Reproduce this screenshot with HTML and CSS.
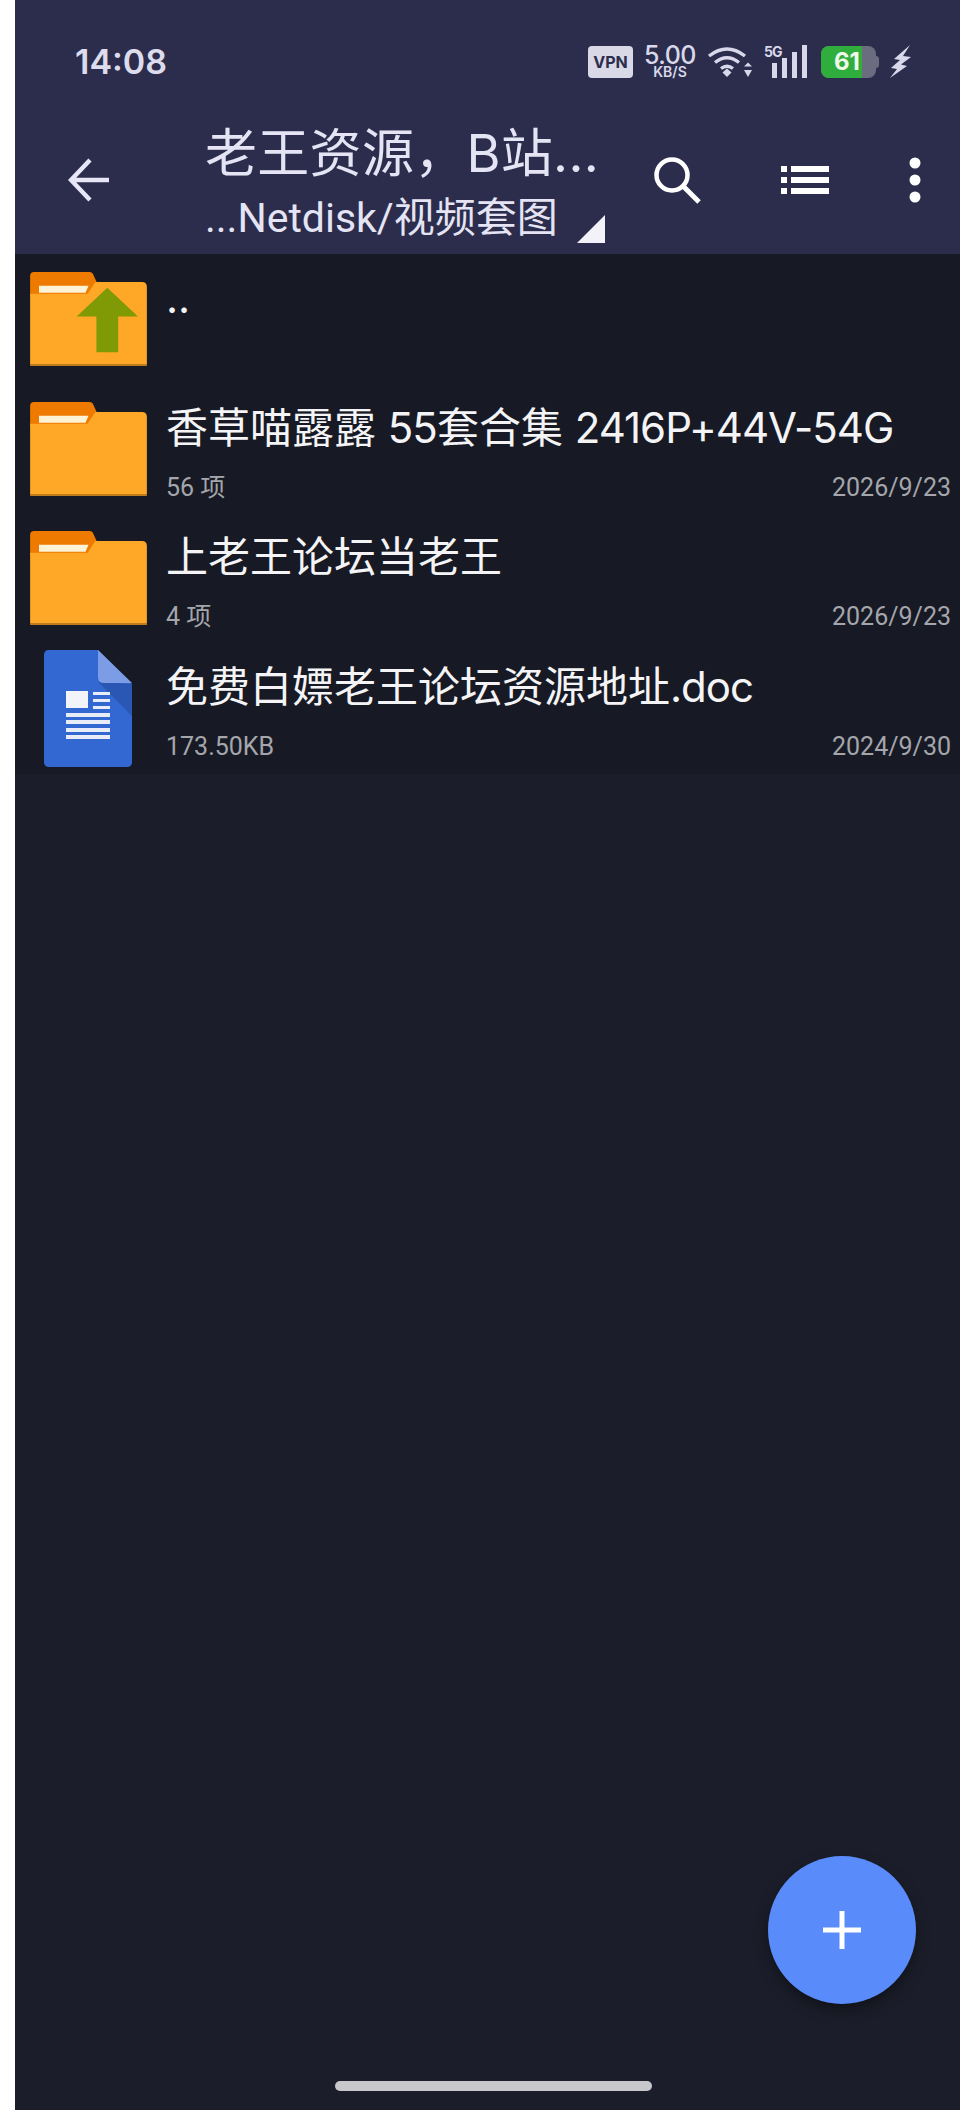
FILE: index.html
```html
<!DOCTYPE html>
<html lang="zh-CN">
<head>
  <meta charset="UTF-8">
  <meta name="viewport" content="width=device-width, initial-scale=1.0">
  <title>老王资源</title>
  <link rel="stylesheet" href="styles.css">
</head>
<body>
  <div class="app">
    <!-- Header -->
    <div class="header">
      <div class="status-bar">
        <span class="time">14:08</span>
        <div class="status-icons">
          <span class="vpn">VPN</span>
          <span class="speed"><b>5.00</b><i>KB/S</i></span>
          <svg class="wifi" width="45" height="32" viewBox="0 0 45 32">
            <path d="M2 10 Q20 -4 38 10 M8 16.500 Q20 7 32 16.500 M14 22.500 Q20 18 26 22.500" fill="none" stroke="#d8d8ea" stroke-width="3.400"/>
            <path d="M15.500 26.500 L20 22.500 L24.500 26.500 L20 31 Z" fill="#d8d8ea"/>
            <path d="M37 20.500 L41 16.500 L45 20.500 Z M37 24 L41 31 L45 24 Z" fill="#d8d8ea"/>
          </svg>
          <span class="signal">
            <span class="five-g">5G</span>
            <svg width="36" height="33" viewBox="0 0 36 33">
              <path d="M0 18 H5 V33 H0 Z M10 13 H15 V33 H10 Z M20 7 H25 V33 H20 Z M30 0 H35 V33 H30 Z" fill="#d8d8ea"/>
            </svg>
          </span>
          <span class="battery"><span class="battery-fill"></span><span class="battery-num">61</span></span>
          <svg class="bolt" width="21" height="33" viewBox="0 0 21 33">
            <path d="M20 0 L4 14 L10 15 L1 23 L7 24 L0 33 L17 21 L11 19.500 L21 12 L13 11 Z" fill="#d8d8ea"/>
          </svg>
        </div>
      </div>
      <div class="toolbar">
        <div class="back-slot">
          <svg width="42" height="44" viewBox="0 0 42 44">
            <path d="M41 22 H3 M22 2 L3 22 L22 42" fill="none" stroke="#e6e6f6" stroke-width="4.500"/>
          </svg>
        </div>
        <div class="titles">
          <div class="title">老王资源，B站...</div>
          <div class="subtitle">
            <span>...Netdisk/视频套图</span>
            <svg class="corner" width="28" height="28" viewBox="0 0 28 28"><path d="M28 0 V28 H0 Z" fill="#f2f2f8"/></svg>
          </div>
        </div>
        <div class="actions">
          <svg width="48" height="48" viewBox="0 0 48 48">
            <circle cx="19" cy="19" r="15.500" fill="none" stroke="#fff" stroke-width="4.500"/>
            <path d="M30 30 L46 46" stroke="#fff" stroke-width="5"/>
          </svg>
          <svg width="48" height="28" viewBox="0 0 48 28">
            <path d="M0 0 H6 V6 H0 Z M0 11 H6 V17 H0 Z M0 22 H6 V28 H0 Z M10 0 H48 V6 H10 Z M10 11 H48 V17 H10 Z M10 22 H48 V28 H10 Z" fill="#fff"/>
          </svg>
          <svg width="12" height="46" viewBox="0 0 12 46">
            <circle cx="6" cy="6" r="5.500" fill="#fff"/>
            <circle cx="6" cy="23" r="5.500" fill="#fff"/>
            <circle cx="6" cy="40" r="5.500" fill="#fff"/>
          </svg>
        </div>
      </div>
    </div>

    <!-- File list -->
    <div class="file-list">
      <div class="file-row">
        <div class="icon-slot">
          <svg width="117" height="94" viewBox="0 0 118 95">
            <use href="#folder"/>
            <path d="M78 16 L109 45 H89 V81 H67 V45 H47 Z" fill="#7f9a05"/>
          </svg>
        </div>
        <div class="file-info">
          <div class="file-name">..</div>
        </div>
      </div>
      <div class="file-row">
        <div class="icon-slot">
          <svg width="117" height="94" viewBox="0 0 118 95"><use href="#folder"/></svg>
        </div>
        <div class="file-info">
          <div class="file-name">香草喵露露 <span class="latin">55</span>套合集 <span class="latin">2416P+44V-54G</span></div>
          <div class="file-meta"><span>56 项</span><span>2026/9/23</span></div>
        </div>
      </div>
      <div class="file-row">
        <div class="icon-slot">
          <svg width="117" height="94" viewBox="0 0 118 95"><use href="#folder"/></svg>
        </div>
        <div class="file-info">
          <div class="file-name">上老王论坛当老王</div>
          <div class="file-meta"><span>4 项</span><span>2026/9/23</span></div>
        </div>
      </div>
      <div class="file-row">
        <div class="icon-slot doc-slot">
          <svg width="88" height="118" viewBox="0 0 88 118">
            <path d="M5 0 H54 L88 34 V112 Q88 117 83 117 H5 Q0 117 0 112 V5 Q0 0 5 0 Z" fill="#3367d1"/>
            <path d="M54 32 L88 34 V66 Z" fill="#2b57b4"/>
            <path d="M54 0 L88 33 H60 Q54 33 54 27 Z" fill="#7c9de6"/>
            <path d="M22 41 H44 V58 H22 Z" fill="#f3f4fa"/>
            <path d="M49 42 H66 V45 H49 Z M49 49 H66 V52 H49 Z M49 56 H66 V59 H49 Z M22 63 H66 V67 H22 Z M22 70 H66 V74 H22 Z M22 78 H66 V82 H22 Z M22 85 H66 V89 H22 Z" fill="#e8ecf8"/>
          </svg>
        </div>
        <div class="file-info">
          <div class="file-name">免费白嫖老王论坛资源地址<span class="latin">.doc</span></div>
          <div class="file-meta"><span>173.50KB</span><span>2024/9/30</span></div>
        </div>
      </div>
    </div>

    <!-- Floating add button -->
    <div class="fab">
      <svg width="40" height="40" viewBox="0 0 40 40">
        <path d="M20 1 V39 M1 20 H39" stroke="#fff" stroke-width="5"/>
      </svg>
    </div>
    <div class="home-bar"></div>
  </div>

  <svg class="defs" width="0" height="0">
    <defs>
      <g id="folder">
        <path d="M4 0 H60 Q63 0 64 3 L68 12 L60 24 H0 V4 Q0 0 4 0 Z" fill="#ee7a00"/>
        <path d="M0 93 V22 H58 L66 10 H113 Q118 10 118 15 V93 Z" fill="#ffa726"/>
        <path d="M0 93 H118 V95 H0 Z" fill="#c07c1c"/>
        <path d="M9 14 H59 L56 21 H9 Z" fill="#fff3d6"/>
      </g>
    </defs>
  </svg>
</body>
</html>
```

FILE: styles.css
```css
html, body {
  margin: 0;
  padding: 0;
}
body {
  width: 960px;
  height: 2110px;
  background: #fff;
  font-family: Roboto, "Noto Sans CJK SC", sans-serif;
  overflow: hidden;
}
.defs {
  display: block;
  height: 0;
}
.app {
  position: relative;
  margin-left: 15px;
  height: 2110px;
  background: #1b1e2a;
}

/* header */
.header {
  height: 254px;
  background: #2c2d4c;
}
.status-bar {
  height: 110px;
  padding: 45px 49px 0 60px;
  box-sizing: border-box;
  display: flex;
  justify-content: space-between;
  align-items: flex-start;
  font-family: Inter, "Noto Sans CJK SC", sans-serif;
}
.time {
  font-size: 34px;
  line-height: 34px;
  font-weight: 600;
  color: #dcdcec;
}
.status-icons {
  display: flex;
  align-items: flex-start;
  gap: 11px;
  color: #d8d8ea;
}
.vpn {
  width: 45px;
  height: 32px;
  margin-top: 1px;
  border-radius: 4px;
  background: #d8d8e6;
  color: #2c2d4c;
  font-size: 16px;
  font-weight: 700;
  line-height: 32px;
  text-align: center;
}
.speed {
  width: 52px;
  display: flex;
  flex-direction: column;
  align-items: center;
}
.speed b {
  font-size: 25px;
  line-height: 20px;
  font-weight: 500;
  letter-spacing: -0.5px;
}
.speed i {
  font-style: normal;
  font-size: 14px;
  line-height: 14px;
  font-weight: 600;
}
.wifi {
  margin-top: 1px;
}
.signal {
  position: relative;
  width: 44px;
  height: 33px;
  margin-left: 1px;
  display: flex;
  justify-content: flex-end;
}
.five-g {
  position: absolute;
  left: 0;
  top: 0;
  font-size: 14px;
  line-height: 14px;
  font-weight: 700;
  letter-spacing: -1px;
}
.battery {
  position: relative;
  width: 55px;
  height: 32px;
  margin: 1px 3px 0 2px;
  border-radius: 8px;
  background: #6c6c80;
}
.battery::after {
  content: "";
  position: absolute;
  right: -3px;
  top: 10px;
  width: 3px;
  height: 12px;
  border-radius: 0 3px 3px 0;
  background: #6c6c80;
}
.battery-fill {
  position: absolute;
  left: 0;
  top: 0;
  bottom: 0;
  width: 41px;
  border-radius: 8px 0 0 8px;
  background: #2fae3d;
}
.battery-num {
  position: absolute;
  left: 13px;
  top: 0;
  font-size: 24px;
  line-height: 32px;
  font-weight: 700;
  color: #eef8e8;
}
.toolbar {
  height: 144px;
  display: flex;
}
.back-slot {
  width: 190px;
  padding: 48px 0 0 53px;
  box-sizing: border-box;
}
.titles {
  width: 400px;
  color: #e4e4f4;
}
.title {
  font-family: Inter, "Noto Sans CJK SC", sans-serif;
  font-size: 52px;
  line-height: 66px;
  letter-spacing: 0.3px;
  margin-top: 11px;
  white-space: nowrap;
}
.subtitle {
  display: flex;
  justify-content: space-between;
  align-items: flex-end;
  margin-top: 3px;
  font-size: 41px;
  line-height: 56px;
  white-space: nowrap;
}
.corner {
  margin-bottom: 3px;
}
.actions {
  display: flex;
  align-items: center;
  gap: 80px;
  margin: 0 0 4px 48px;
}

/* list */
.file-list {
  height: 520px;
  background: #171a24;
}
.file-row {
  height: 129.500px;
  display: flex;
}
.icon-slot {
  width: 151px;
  padding: 18px 0 0 15px;
  box-sizing: border-box;
  flex-shrink: 0;
}
.icon-slot svg {
  display: block;
}
.doc-slot {
  padding: 7px 0 0 29px;
}
.file-info {
  flex: 1;
  padding: 14px 9px 0 0;
  color: #f4f4f6;
}
.file-name {
  font-family: Inter, "Noto Sans CJK SC", sans-serif;
  font-size: 42px;
  line-height: 60px;
  white-space: nowrap;
}
.latin {
  letter-spacing: -1px;
}
.file-meta {
  display: flex;
  justify-content: space-between;
  margin-top: 15px;
  font-size: 25px;
  line-height: 30px;
  color: #a4a6ac;
}

/* floating button and gesture bar */
.fab {
  position: absolute;
  left: 753px;
  top: 1856px;
  width: 148px;
  height: 148px;
  border-radius: 50%;
  background: #5a8bfb;
  box-shadow: 0 6px 14px rgba(0, 0, 0, 0.4);
  display: flex;
  align-items: center;
  justify-content: center;
}
.home-bar {
  position: absolute;
  left: 320px;
  top: 2081px;
  width: 317px;
  height: 10px;
  border-radius: 5px;
  background: #c8c8cc;
}
```
